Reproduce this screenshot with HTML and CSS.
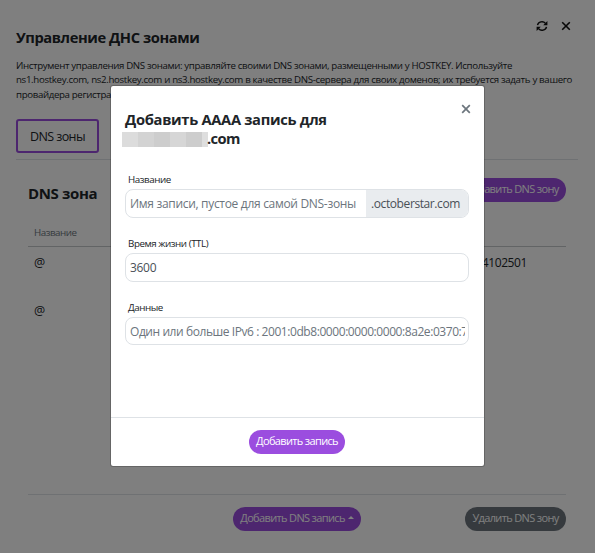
FILE: index.html
```html
<!DOCTYPE html>
<html lang="ru">
<head>
<meta charset="utf-8">
<title>Управление ДНС зонами</title>
<link rel="stylesheet" href="styles.css">
</head>
<body>
<main class="page">
  <header class="page-header">
    <h1 class="page-title">Управление ДНС зонами</h1>
    <div class="page-actions">
      <svg class="icon-refresh" viewBox="0 0 12 12"><path d="M1.5 5.2A4.5 4.1 0 0 1 9.5 3.4M10.5 6.8A4.5 4.1 0 0 1 2.5 8.6" fill="none" stroke="currentColor" stroke-width="1.4"/><path d="M11.4 1v4.2H7.2zM.6 11V6.8h4.2z" fill="currentColor"/></svg>
      <svg class="icon-close" viewBox="0 0 10 10"><path d="M1.2 1.2l7.6 7.6M8.8 1.2L1.2 8.8" fill="none" stroke="currentColor" stroke-width="1.6"/></svg>
    </div>
  </header>
  <p class="intro"><span>Инструмент управления DNS зонами: управляйте своими DNS зонами, размещенными у HOSTKEY. Используйте</span><br><span class="intro-wide">ns1.hostkey.com, ns2.hostkey.com и ns3.hostkey.com в качестве DNS-сервера для своих доменов; их требуется задать у вашего</span><br><span>провайдера регистрации</span></p>
  <div class="tabs"><div class="tab">DNS зоны</div></div>
  <section class="zone">
    <div class="zone-header">
      <h2 class="zone-title">DNS зона</h2>
      <div class="btn btn-add-zone">Добавить DNS зону</div>
    </div>
    <div class="records">
      <div class="row row-head"><span>Название</span></div>
      <div class="row"><span>@</span><span class="serial">4102501</span></div>
      <div class="row"><span>@</span></div>
    </div>
    <div class="zone-footer">
      <div class="btn btn-add-record">Добавить DNS запись<i class="caret"></i></div>
      <div class="btn btn-delete">Удалить DNS зону</div>
    </div>
  </section>
</main>
<div class="backdrop"></div>
<div class="modal">
  <div class="modal-header">
    <h2 class="modal-title">Добавить АААА запись для<br><span class="domain"><span class="mask"><i></i><i></i><i></i><i></i><i></i><i></i></span>.com</span></h2>
    <svg class="modal-close" viewBox="0 0 10 10"><path d="M1.2 1.2l7.6 7.6M8.8 1.2L1.2 8.8" fill="none" stroke="currentColor" stroke-width="1.7"/></svg>
  </div>
  <div class="modal-body">
    <div class="field">
      <div class="label">Название</div>
      <div class="control">
        <span class="placeholder">Имя записи, пустое для самой DNS-зоны</span>
        <span class="addon">.octoberstar.com</span>
      </div>
    </div>
    <div class="field">
      <div class="label">Время жизни (TTL)</div>
      <div class="control"><span class="value">3600</span></div>
    </div>
    <div class="field">
      <div class="label">Данные</div>
      <div class="control control-data"><span class="placeholder ph-data">Один или больше IPv6 : 2001:0db8:0000:0000:0000:8a2e:0370:7334</span></div>
    </div>
  </div>
  <div class="modal-footer"><div class="btn btn-submit">Добавить запись</div></div>
</div>
</body>
</html>
```
FILE: styles.css
```css
* { box-sizing: border-box; }
body {
  margin: 0;
  width: 595px;
  height: 553px;
  overflow: hidden;
  background: #fff;
  color: #212529;
  font-family: "Open Sans", "Noto Sans", sans-serif;
  font-size: 12px;
}
h1, h2, p { margin: 0; }
span, .btn, .label, .tab { white-space: nowrap; }

.page { padding: 20px 17px 0 16px; }
.page-header { display: flex; justify-content: space-between; height: 38px; }
.page-title { padding-top: 6px; font-size: 14.7px; line-height: 22px; font-weight: 700; letter-spacing: -0.42px; }
.page-actions { display: flex; gap: 13px; padding-right: 7px; color: #111; }
.icon-refresh { width: 12px; height: 12px; }
.icon-close { width: 10px; height: 10px; margin-top: 1px; }
.intro { height: 61px; padding-top: 1px; font-size: 9.7px; line-height: 14.4px; letter-spacing: -0.36px; }
.intro-wide { letter-spacing: -0.335px; }
.tabs { height: 41px; border-bottom: 1px solid #dee2e6; }
.tab {
  width: 83px;
  height: 34px;
  border: 2px solid #9b4ddf;
  border-radius: 3px;
  text-align: center;
  font-size: 12.5px;
  line-height: 31px;
  letter-spacing: -0.6px;
}

.zone { padding: 18px 12px 0 12px; }
.zone-header { display: flex; justify-content: space-between; height: 42px; }
.zone-title { font-size: 15px; line-height: 30px; font-weight: 700; letter-spacing: -0.35px; }
.btn {
  height: 24px;
  border-radius: 12px;
  background: #9b4ddf;
  color: #fff;
  text-align: center;
  font-size: 11px;
  line-height: 22px;
  letter-spacing: -0.65px;
}
.btn-add-zone { width: 108px; }
.records { height: 275px; border-bottom: 1px solid #dee2e6; }
.row { display: flex; justify-content: space-between; height: 48px; padding: 7px 39px 0 6px; font-size: 12.5px; line-height: 18px; }
.row-head { height: 27px; padding-top: 4px; border-bottom: 1px solid #c4c8cb; color: #6c757d; font-size: 9.8px; letter-spacing: -0.5px; }
.serial { font-size: 12px; letter-spacing: -0.4px; }
.zone-footer { display: flex; justify-content: space-between; padding: 12px 0 0 205px; }
.btn-add-record { width: 128px; }
.btn-delete { width: 101px; background: #6c757d; }
.caret {
  display: inline-block;
  margin-left: 3px;
  border: 3px solid transparent;
  border-top: 0;
  border-bottom-color: currentColor;
  vertical-align: 3px;
}

.backdrop { position: absolute; inset: 0; background: rgba(0, 0, 0, 0.5); }
.modal {
  position: absolute;
  left: 110px;
  top: 85px;
  width: 375px;
  height: 382px;
  display: flex;
  flex-direction: column;
  border: 1px solid rgba(0, 0, 0, 0.2);
  border-radius: 3px;
  background: #fff;
  background-clip: padding-box;
}
.modal-header { display: flex; justify-content: space-between; height: 85px; padding: 24px 13px 0 14px; }
.modal-title { font-size: 14.7px; line-height: 19px; font-weight: 700; letter-spacing: -0.3px; }
.domain { display: flex; align-items: center; margin-left: -3px; letter-spacing: -0.6px; }
.mask { display: flex; height: 15px; margin: 1px -1px 0 0; }
.mask i { width: 16px; background: #dcdcdc; }
.mask i:nth-child(2) { background: #d3d3d3; }
.mask i:nth-child(3) { background: #cdcdcd; }
.mask i:nth-child(4) { background: #d6d6d6; }
.mask i:nth-child(5) { background: #cdcdcd; }
.mask i:nth-child(6) { width: 6px; background: #dedede; }
.modal-close { width: 10px; height: 10px; margin-top: -6px; color: #6c757d; }
.modal-body { flex: 1; padding: 0 15px 0 14px; }
.field { height: 64px; }
.label { height: 18px; padding-left: 3px; font-size: 9.8px; line-height: 18px; letter-spacing: -0.45px; }
.control {
  display: flex;
  height: 29px;
  overflow: hidden;
  border: 1px solid #dee2e6;
  border-radius: 8px;
  font-size: 12px;
  line-height: 27px;
  color: #495057;
  letter-spacing: -0.31px;
  padding-left: 4px;
  padding-right: 3px;
}
.control-data { height: 28px; }
.placeholder { flex: 1; min-width: 0; overflow: hidden; color: #6c757d; }
.ph-data { letter-spacing: -0.43px; }
.addon { width: 103px; margin: -1px -4px; padding: 1px 0 0 5px; background: #e9ecef; letter-spacing: -0.4px; }
.modal-footer { display: flex; justify-content: center; height: 49px; padding: 12px 1px 0 0; border-top: 1px solid #dee2e6; }
.btn-submit { width: 96px; }
```
